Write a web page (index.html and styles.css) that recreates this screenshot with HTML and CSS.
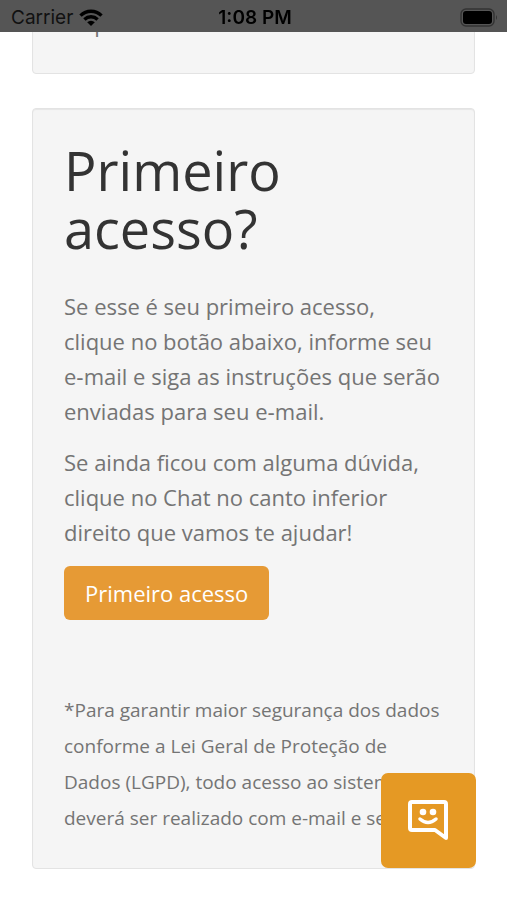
FILE: index.html
```
<!DOCTYPE html>
<html lang="pt-BR">
<head>
    <meta charset="UTF-8">
    <meta name="viewport" content="width=device-width, initial-scale=1.0">
    <title>Primeiro acesso</title>
    <link rel="stylesheet" href="styles.css">
</head>
<body>
    <header class="status">
        <div class="carrier">
            <span>Carrier</span>
            <svg width="24" height="18" viewBox="0 0 24 18">
                <path d="M1.500 6.600a15 15 0 0 1 21 0M5.400 10.400a9.600 9.600 0 0 1 13.200 0" fill="none" stroke="#000" stroke-width="3.400"/>
                <path d="M12 17l-3.800-3.800a5.400 5.400 0 0 1 7.600 0z"/>
            </svg>
        </div>
        <div class="time">1:08 PM</div>
        <div class="battery">
            <svg width="39" height="20" viewBox="0 0 39 20">
                <rect x="1" y="1" width="33" height="17" rx="5" fill="none" stroke="#333" stroke-width="1.4"/>
                <rect x="3" y="3" width="29" height="13" rx="3"/>
                <path d="M36 7q2 2.500 0 5z" fill="#333"/>
            </svg>
        </div>
    </header>
    <main class="page">
        <section class="card login">
            <p>Se precisar</p>
        </section>
        <section class="card">
            <h1>Primeiro acesso?</h1>
            <p>Se esse é seu primeiro acesso,<br>clique no botão abaixo, informe seu e&#8209;mail e siga as instruções que serão enviadas para seu e&#8209;mail.</p>
            <p>Se ainda ficou com alguma dúvida, clique no Chat no canto inferior direito que vamos te ajudar!</p>
            <button type="button" class="btn">Primeiro acesso</button>
            <p class="note">*Para garantir maior segurança dos dados conforme a Lei Geral de Proteção de Dados (LGPD), todo acesso ao sistema deverá ser realizado com e-mail e senha.</p>
        </section>
    </main>
    <button type="button" class="chat" aria-label="Chat">
        <svg width="42" height="42" viewBox="0 0 42 42" fill="none" stroke="#fff" stroke-width="4" stroke-linejoin="round" stroke-linecap="round">
            <path d="M4 2h32a2 2 0 0 1 2 2v34l-11-8H4a2 2 0 0 1-2-2V4a2 2 0 0 1 2-2z"/>
            <path d="M12 19q8 7 16 0" stroke-width="3.500"/>
            <circle cx="15" cy="12" r="3.300" fill="#fff" stroke="none"/>
            <circle cx="25" cy="12" r="3.300" fill="#fff" stroke="none"/>
        </svg>
    </button>
</body>
</html>
```
FILE: styles.css
```
*{
    box-sizing: border-box;
}
body{
    margin: 0;
    background-color: #fff;
    color: #747474;
    font-family: "Open Sans", sans-serif;
    font-size: 22px;
    line-height: 35px;
}
.status{
    position: fixed;
    top: 0;
    left: 0;
    right: 0;
    z-index: 2;
    height: 32px;
    padding: 2px 8px 0 11px;
    display: grid;
    grid-template-columns: 1fr auto 1fr;
    align-items: center;
    background-color: #555;
    color: #111;
    font-family: Inter, sans-serif;
    font-size: 19px;
    line-height: 32px;
}
.carrier{
    display: flex;
    align-items: center;
    gap: 6px;
}
.time{
    font-weight: 600;
    color: #000;
}
.battery{
    display: flex;
    justify-content: flex-end;
}
.page{
    display: flex;
    flex-direction: column;
    gap: 34px;
    padding: 0 32px 32px;
}
.card{
    padding: 32px 31px;
    background-color: #f5f5f5;
    border: 1px solid #e3e3e3;
    border-radius: 4px;
    box-shadow: inset 0 1px 1px #e6e6e6;
}
.login{
    padding-top: 5px;
    padding-bottom: 16px;
}
h1{
    margin: 0 0 32px;
    color: #333;
    font-size: 54px;
    font-weight: 400;
    line-height: 58px;
}
p{
    margin: 0 0 16px;
}
.btn{
    display: block;
    height: 54px;
    padding: 0 21px;
    background-color: #e69a35;
    border: none;
    border-radius: 6px;
    color: #fff;
    font-family: inherit;
    font-size: 22px;
    line-height: 35px;
}
.note{
    margin: 72px 0 0;
    font-size: 19px;
    line-height: 36px;
}
.chat{
    position: fixed;
    right: 31px;
    bottom: 32px;
    width: 95px;
    height: 95px;
    padding: 0;
    display: flex;
    align-items: center;
    justify-content: center;
    background-color: #e59924;
    border: none;
    border-radius: 7px;
}
```
